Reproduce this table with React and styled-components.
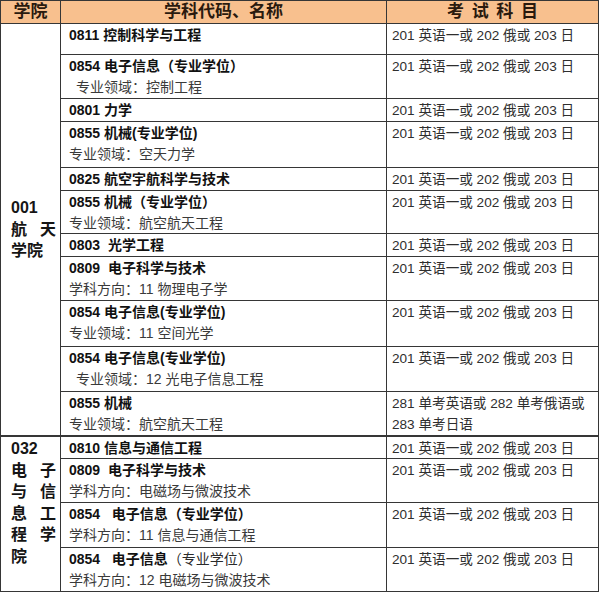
import React from 'react'
import styled, { createGlobalStyle } from 'styled-components'

const GlobalStyle = createGlobalStyle`
  body {
    margin: 0;
    background: #ffffff;
    font-family: "Liberation Sans", "Noto Sans CJK SC", sans-serif;
  }
`

const groups = [
  {
    code: '001',
    lines: ['航天', '学院'],
    center: true,
    rows: [
      { h: 30, title: '0811 控制科学与工程' },
      { h: 43, title: '0854 电子信息（专业学位）', sub: '专业领域：控制工程', indent: true },
      { h: 22, title: '0801 力学' },
      { h: 45, title: '0855 机械(专业学位)', sub: '专业领域：空天力学' },
      { h: 22, title: '0825 航空宇航科学与技术' },
      { h: 42, title: '0855 机械（专业学位）', sub: '专业领域：航空航天工程' },
      { h: 22, title: '0803  光学工程' },
      { h: 43, title: '0809  电子科学与技术', sub: '学科方向：11 物理电子学' },
      { h: 45, title: '0854 电子信息(专业学位)', sub: '专业领域：11 空间光学' },
      { h: 44, title: '0854 电子信息(专业学位)', sub: '专业领域：12 光电子信息工程', indent: true },
      {
        h: 43,
        title: '0855 机械',
        sub: '专业领域：航空航天工程',
        exam: ['281 单考英语或 282 单考俄语或', '283 单考日语'],
      },
    ],
  },
  {
    code: '032',
    lines: ['电子', '与信', '息工', '程学', '院'],
    rows: [
      { h: 22, title: '0810 信息与通信工程' },
      { h: 43, title: '0809  电子科学与技术', sub: '学科方向：电磁场与微波技术' },
      { h: 44, title: '0854   电子信息（专业学位）', sub: '学科方向：11 信息与通信工程' },
      { h: 43, title: '0854   电子信息', light: '（专业学位）', sub: '学科方向：12 电磁场与微波技术' },
    ],
  },
]

const defaultExam = ['201 英语一或 202 俄或 203 日']

const allRows = groups.flatMap((g) => g.rows)

const Sheet = styled.div`
  display: grid;
  width: 599px;
  box-sizing: border-box;
  grid-template-columns: 59px 325px 211px;
  grid-template-rows: 22px ${allRows.map((r) => r.h + 'px').join(' ')};
  gap: 1px;
  padding: 1px;
  background: #363636;
`

const HeadCell = styled.div`
  background: #f8c08e;
  color: #2a1a0e;
  font-size: 17px;
  font-weight: 700;
  line-height: 22px;
  text-align: center;
  letter-spacing: ${(p) => p.$spread || '0'};
  padding-left: ${(p) => p.$spread || '0'};
  white-space: nowrap;
`

const CollegeCell = styled.div`
  grid-column: 1;
  grid-row: ${(p) => p.$start} / span ${(p) => p.$span};
  background: #ffffff;
  display: flex;
  flex-direction: column;
  justify-content: ${(p) => (p.$center ? 'center' : 'flex-start')};
  padding: ${(p) => (p.$center ? '0 4px 0 10px' : '1px 4px 0 10px')};
  border-top: ${(p) => (p.$thick ? '1px solid #363636' : 'none')};
  color: #151515;
  font-size: 16px;
  font-weight: 700;
  line-height: 21.6px;
`

const CollegeLine = styled.div`
  display: flex;
  justify-content: ${(p) => (p.$wide ? 'space-between' : 'flex-start')};
  width: 45px;
`

const MajorCell = styled.div`
  grid-column: 2;
  background: #ffffff;
  padding: 1px 6px 0 8px;
  border-top: ${(p) => (p.$thick ? '1px solid #363636' : 'none')};
  font-size: 14px;
  line-height: 21px;
  overflow: hidden;
`

const Title = styled.div`
  color: #111111;
  font-weight: 700;
  white-space: pre;
`

const Light = styled.span`
  font-weight: 400;
  color: #2a2a2a;
`

const Sub = styled.div`
  color: #3a3a3a;
  padding-left: ${(p) => (p.$indent ? '7px' : '0')};
  white-space: pre;
`

const ExamCell = styled.div`
  grid-column: 3;
  background: #ffffff;
  padding: 1px 4px 0 5px;
  border-top: ${(p) => (p.$thick ? '1px solid #363636' : 'none')};
  color: #2e2e2e;
  font-size: 13.6px;
  line-height: 21px;
  white-space: nowrap;
`

export default function App() {
  let rowIndex = 2
  const cells = []

  groups.forEach((g, gi) => {
    const start = rowIndex
    cells.push(
      <CollegeCell
        key={'c' + gi}
        $start={start}
        $span={g.rows.length}
        $center={g.center}
        $thick={gi > 0}
      >
        <CollegeLine>{g.code}</CollegeLine>
        {g.lines.map((line, li) => (
          <CollegeLine key={li} $wide={line.length > 1 && (li < g.lines.length - 1 || !g.center)}>
            {line.split('').map((ch, ci) => (
              <span key={ci}>{ch}</span>
            ))}
          </CollegeLine>
        ))}
      </CollegeCell>
    )

    g.rows.forEach((r, ri) => {
      const thick = gi > 0 && ri === 0
      cells.push(
        <MajorCell key={'m' + rowIndex} $thick={thick} style={{ gridRow: rowIndex }}>
          <Title>
            {r.title}
            {r.light && <Light>{r.light}</Light>}
          </Title>
          {r.sub && <Sub $indent={r.indent}>{r.sub}</Sub>}
        </MajorCell>
      )
      cells.push(
        <ExamCell key={'e' + rowIndex} $thick={thick} style={{ gridRow: rowIndex }}>
          {(r.exam || defaultExam).map((line, li) => (
            <div key={li}>{line}</div>
          ))}
        </ExamCell>
      )
      rowIndex += 1
    })
  })

  return (
    <>
      <GlobalStyle />
      <Sheet>
        <HeadCell>学院</HeadCell>
        <HeadCell>学科代码、名称</HeadCell>
        <HeadCell $spread="0.45em">考试科目</HeadCell>
        {cells}
      </Sheet>
    </>
  )
}
